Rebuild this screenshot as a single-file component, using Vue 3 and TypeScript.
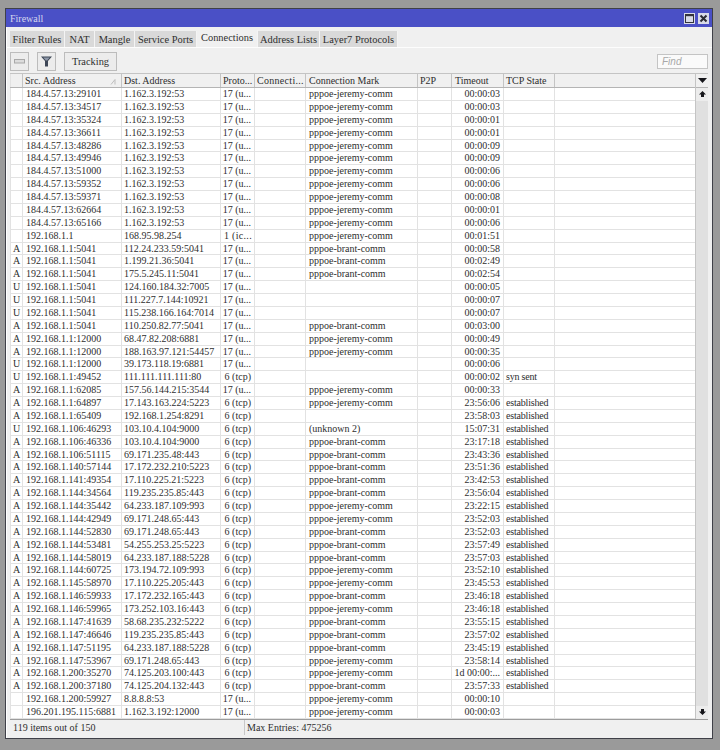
<script setup lang="ts">
type Row = [string, string, string, string, string, string, string]

const tabs = [
  { label: 'Filter Rules', width: 55 },
  { label: 'NAT', width: 30 },
  { label: 'Mangle', width: 40 },
  { label: 'Service Ports', width: 62 },
  { label: 'Connections', width: 61, active: true },
  { label: 'Address Lists', width: 62 },
  { label: 'Layer7 Protocols', width: 78 }
]

const columns = ['', 'Src. Address', 'Dst. Address', 'Proto...', 'Connecti...', 'Connection Mark', 'P2P', 'Timeout', 'TCP State', '']

const J = 'pppoe-jeremy-comm'
const B = 'pppoe-brant-comm'
const UDP = '17 (u...'
const ICMP = '1 (ic...'
const TCP = '6 (tcp)'
const EST = 'established'
const DNS = '1.162.3.192:53'

const rows: Row[] = [
  ['', '184.4.57.13:29101', DNS, UDP, J, '00:00:03', ''],
  ['', '184.4.57.13:34517', DNS, UDP, J, '00:00:03', ''],
  ['', '184.4.57.13:35324', DNS, UDP, J, '00:00:01', ''],
  ['', '184.4.57.13:36611', DNS, UDP, J, '00:00:01', ''],
  ['', '184.4.57.13:48286', DNS, UDP, J, '00:00:09', ''],
  ['', '184.4.57.13:49946', DNS, UDP, J, '00:00:09', ''],
  ['', '184.4.57.13:51000', DNS, UDP, J, '00:00:06', ''],
  ['', '184.4.57.13:59352', DNS, UDP, J, '00:00:06', ''],
  ['', '184.4.57.13:59371', DNS, UDP, J, '00:00:08', ''],
  ['', '184.4.57.13:62664', DNS, UDP, J, '00:00:01', ''],
  ['', '184.4.57.13:65166', DNS, UDP, J, '00:00:06', ''],
  ['', '192.168.1.1', '168.95.98.254', ICMP, J, '00:01:51', ''],
  ['A', '192.168.1.1:5041', '112.24.233.59:5041', UDP, B, '00:00:58', ''],
  ['A', '192.168.1.1:5041', '1.199.21.36:5041', UDP, B, '00:02:49', ''],
  ['A', '192.168.1.1:5041', '175.5.245.11:5041', UDP, B, '00:02:54', ''],
  ['U', '192.168.1.1:5041', '124.160.184.32:7005', UDP, '', '00:00:05', ''],
  ['U', '192.168.1.1:5041', '111.227.7.144:10921', UDP, '', '00:00:07', ''],
  ['U', '192.168.1.1:5041', '115.238.166.164:7014', UDP, '', '00:00:07', ''],
  ['A', '192.168.1.1:5041', '110.250.82.77:5041', UDP, B, '00:03:00', ''],
  ['A', '192.168.1.1:12000', '68.47.82.208:6881', UDP, J, '00:00:49', ''],
  ['A', '192.168.1.1:12000', '188.163.97.121:54457', UDP, J, '00:00:35', ''],
  ['U', '192.168.1.1:12000', '39.173.118.19:6881', UDP, '', '00:00:06', ''],
  ['U', '192.168.1.1:49452', '111.111.111.111:80', TCP, '', '00:00:02', 'syn sent'],
  ['A', '192.168.1.1:62085', '157.56.144.215:3544', UDP, J, '00:00:33', ''],
  ['A', '192.168.1.1:64897', '17.143.163.224:5223', TCP, J, '23:56:06', EST],
  ['A', '192.168.1.1:65409', '192.168.1.254:8291', TCP, '', '23:58:03', EST],
  ['U', '192.168.1.106:46293', '103.10.4.104:9000', TCP, '(unknown 2)', '15:07:31', EST],
  ['A', '192.168.1.106:46336', '103.10.4.104:9000', TCP, B, '23:17:18', EST],
  ['A', '192.168.1.106:51115', '69.171.235.48:443', TCP, B, '23:43:36', EST],
  ['A', '192.168.1.140:57144', '17.172.232.210:5223', TCP, B, '23:51:36', EST],
  ['A', '192.168.1.141:49354', '17.110.225.21:5223', TCP, B, '23:42:53', EST],
  ['A', '192.168.1.144:34564', '119.235.235.85:443', TCP, B, '23:56:04', EST],
  ['A', '192.168.1.144:35442', '64.233.187.109:993', TCP, J, '23:22:15', EST],
  ['A', '192.168.1.144:42949', '69.171.248.65:443', TCP, J, '23:52:03', EST],
  ['A', '192.168.1.144:52830', '69.171.248.65:443', TCP, B, '23:52:03', EST],
  ['A', '192.168.1.144:53481', '54.255.253.25:5223', TCP, B, '23:57:49', EST],
  ['A', '192.168.1.144:58019', '64.233.187.188:5228', TCP, B, '23:57:03', EST],
  ['A', '192.168.1.144:60725', '173.194.72.109:993', TCP, J, '23:52:10', EST],
  ['A', '192.168.1.145:58970', '17.110.225.205:443', TCP, J, '23:45:53', EST],
  ['A', '192.168.1.146:59933', '17.172.232.165:443', TCP, B, '23:46:18', EST],
  ['A', '192.168.1.146:59965', '173.252.103.16:443', TCP, J, '23:46:18', EST],
  ['A', '192.168.1.147:41639', '58.68.235.232:5222', TCP, B, '23:55:15', EST],
  ['A', '192.168.1.147:46646', '119.235.235.85:443', TCP, B, '23:57:02', EST],
  ['A', '192.168.1.147:51195', '64.233.187.188:5228', TCP, B, '23:45:19', EST],
  ['A', '192.168.1.147:53967', '69.171.248.65:443', TCP, J, '23:58:14', EST],
  ['A', '192.168.1.200:35270', '74.125.203.100:443', TCP, J, '1d 00:00:...', EST],
  ['A', '192.168.1.200:37180', '74.125.204.132:443', TCP, B, '23:57:33', EST],
  ['', '192.168.1.200:59927', '8.8.8.8:53', UDP, J, '00:00:10', ''],
  ['', '196.201.195.115:6881', '1.162.3.192:12000', UDP, J, '00:00:03', '']
]
</script>

<template>
  <div class="page">
    <div class="window">
      <div class="titlebar">
        <span class="title">Firewall</span>
        <span class="win-btn">
          <svg width="9" height="9" viewBox="0 0 9 9"><rect x="0.5" y="0.5" width="8" height="8" fill="none" stroke="#33343c" /><path d="M0.5 1.5h8" stroke="#33343c" stroke-width="1.4" /></svg>
        </span>
        <span class="win-btn">
          <svg width="9" height="9" viewBox="0 0 9 9"><path d="M1.5 1.5l6 6M7.5 1.5l-6 6" stroke="#2b2c34" stroke-width="2" /></svg>
        </span>
      </div>

      <div class="tabs">
        <div
          v-for="tab in tabs"
          :key="tab.label"
          class="tab"
          :class="{ active: tab.active }"
          :style="{ width: tab.width + 'px' }"
        >{{ tab.label }}</div>
      </div>

      <div class="toolbar">
        <button class="tool minus">
          <svg width="11" height="5" viewBox="0 0 11 5"><rect x="0.5" y="0.5" width="10" height="3.5" fill="#dcdcdc" stroke="#a8a8a8" /></svg>
        </button>
        <button class="tool funnel">
          <svg width="11" height="11" viewBox="0 0 11 11"><path d="M0 0.5h11L7 5V10.5H4V5z" fill="#3d4656" /><path d="M2.2 1.5h6.6L6.2 4.4H4.8z" fill="#8d97a8" /></svg>
        </button>
        <button class="tool tracking">Tracking</button>
        <div class="find">Find</div>
      </div>

      <div class="table">
        <div class="grid-wrap">
          <div class="row head">
            <div v-for="(col, i) in columns" :key="i" class="cell" :class="'c' + i">
              {{ col }}
              <svg v-if="i === 1" class="sort" width="6" height="6" viewBox="0 0 6 6"><path d="M1 5.5L5 0.5V5.5" fill="none" stroke="#bdbdbd" /></svg>
            </div>
          </div>
          <div v-for="(r, n) in rows" :key="n" class="row">
            <div class="cell c0">{{ r[0] }}</div>
            <div class="cell c1">{{ r[1] }}</div>
            <div class="cell c2">{{ r[2] }}</div>
            <div class="cell c3" :class="{ wide: r[3] === ICMP }">{{ r[3] }}</div>
            <div class="cell c4"></div>
            <div class="cell c5">{{ r[4] }}</div>
            <div class="cell c6"></div>
            <div class="cell c7">{{ r[5] }}</div>
            <div class="cell c8">{{ r[6] }}</div>
            <div class="cell c9"></div>
          </div>
        </div>
        <div class="scroll">
          <div class="scroll-menu">
            <svg width="9" height="5" viewBox="0 0 9 5"><path d="M0 0h9L4.5 5z" fill="#15151a" /></svg>
          </div>
          <div class="scroll-btn">
            <svg width="7" height="7" viewBox="0 0 7 7"><path d="M3.5 0L7 3.5 5 3.5V6H2V3.5H0z" fill="#15151a" /></svg>
          </div>
          <div class="scroll-track"></div>
          <div class="scroll-btn">
            <svg width="7" height="7" viewBox="0 0 7 7"><path d="M3.5 6L7 2.5 5 2.5V0H2V2.5H0z" fill="#15151a" /></svg>
          </div>
        </div>
      </div>

      <div class="status">
        <div class="status-left">119 items out of 150</div>
        <div class="status-right">Max Entries: 475256</div>
      </div>
    </div>
  </div>
</template>

<style>
html, body {
  margin: 0;
  background: #9a9a9a;
}
</style>

<style scoped>
.page {
  width: 720px;
  height: 750px;
  box-sizing: border-box;
  padding: 8px 7px 11px 5px;
  background: #9a9a9a;
  font-family: "Liberation Serif", serif;
  font-size: 10px;
  color: #2e2e2e;
  overflow: hidden;
}

.window {
  height: 100%;
  box-sizing: border-box;
  display: flex;
  flex-direction: column;
  background: #f0f0f0;
  border: 1px solid #3f4048;
  box-shadow: inset 1px 0 0 #fff;
}

.titlebar {
  flex: none;
  height: 18px;
  display: flex;
  align-items: center;
  gap: 3px;
  padding: 0 3px 0 4px;
  background: #4a50c6;
}

.title {
  flex: 1;
  color: #d5d7ee;
  font-size: 10px;
}

.win-btn {
  width: 11px;
  height: 11px;
  display: flex;
  align-items: center;
  justify-content: center;
  background: #d9dbe8;
}

.tabs {
  flex: none;
  display: flex;
  height: 16px;
  margin-top: 4px;
  padding-left: 4px;
  border-bottom: 1px solid #fdfdfd;
}

.tab {
  box-sizing: border-box;
  display: flex;
  align-items: center;
  justify-content: center;
  background: #d9d9d9;
  border-right: 1px solid #f4f4f4;
  font-size: 10.4px;
  white-space: nowrap;
}

.tab.active {
  background: #f0f0f0;
  margin-top: -1px;
  height: 17px;
  padding-bottom: 2px;
}

.toolbar {
  flex: none;
  display: flex;
  align-items: center;
  height: 20px;
  margin-top: 3px;
  padding: 0 4px 0 4px;
}

.tool {
  box-sizing: border-box;
  height: 19px;
  padding: 0;
  display: flex;
  align-items: center;
  justify-content: center;
  background: #ececec;
  border: 1px solid #bcbcbc;
  font-family: inherit;
  font-size: 10.4px;
  color: #2e2e2e;
}

.minus {
  width: 19px;
  margin-right: 8px;
}

.funnel {
  width: 19px;
  margin-right: 8px;
}

.tracking {
  width: 53px;
}

.find {
  box-sizing: border-box;
  margin-left: auto;
  width: 51px;
  height: 15px;
  padding-left: 4px;
  background: #fafafa;
  border: 1px solid #c4c4c4;
  font-family: "Liberation Sans", sans-serif;
  font-style: italic;
  font-size: 10px;
  line-height: 13px;
  color: #a8a8a8;
}

.table {
  flex: none;
  display: flex;
  height: 646px;
  margin: 2px 4px 0 4px;
  border-bottom: 1px solid #9c9c9c;
  background: #fff;
}

.grid-wrap {
  flex: 1;
  min-width: 0;
}

.row {
  display: grid;
  grid-template-columns: 13px 99px 99px 34px 51px 112px 34px 52px 51px 1fr;
  height: 12.88px;
  box-sizing: border-box;
  border-bottom: 1px solid #e2e2e2;
  line-height: 12px;
  white-space: nowrap;
}

.row.head {
  height: 15px;
  line-height: 14px;
  background: #f0f0f0;
  border-top: 1px solid #c4c4c4;
  border-bottom: 1px solid #b4b4b4;
}

.cell {
  position: relative;
  min-width: 0;
  overflow: hidden;
  box-sizing: border-box;
  border-right: 1px solid #e2e2e2;
}

.head .cell {
  border-right-color: #c4c4c4;
}

.c0 {
  text-align: center;
  border-left: 1px solid #e2e2e2;
}

.c1 {
  padding-left: 3px;
}

.head .c1 {
  padding-left: 2px;
}

.c2 {
  padding-left: 2px;
}

.c3 {
  padding-right: 3px;
  text-align: right;
}

.c3.wide {
  padding: 0 0 0 3px;
  text-align: left;
  letter-spacing: 0.3px;
}

.head .c3,
.head .c4,
.head .c6,
.head .c8 {
  padding-left: 2px;
  text-align: left;
}

.head .c4 {
  letter-spacing: 0.3px;
}

.c5 {
  padding-left: 3px;
}

.c7 {
  padding-right: 3px;
  text-align: right;
}

.head .c7 {
  padding-left: 3px;
  text-align: left;
}

.c8 {
  padding-left: 2px;
  letter-spacing: -0.2px;
}

.head .c8 {
  letter-spacing: 0;
}

.c9 {
  border-right: 0;
}

.sort {
  position: absolute;
  right: 5px;
  top: 5px;
}

.scroll {
  flex: none;
  width: 13px;
  display: flex;
  flex-direction: column;
  background: #e4e4e4;
  border-left: 1px solid #c4c4c4;
  box-sizing: border-box;
}

.scroll-menu {
  flex: none;
  height: 15px;
  display: flex;
  align-items: center;
  justify-content: center;
  background: #f0f0f0;
  border-top: 1px solid #c4c4c4;
  border-bottom: 1px solid #b4b4b4;
  box-sizing: border-box;
}

.scroll-btn {
  flex: none;
  height: 13px;
  display: flex;
  align-items: center;
  justify-content: center;
  background: #ececec;
}

.scroll-track {
  flex: 1;
  background: #e0e0e0;
}

.status {
  flex: 1;
  display: flex;
  margin: 0 4px 3px 5px;
  line-height: 15px;
  font-size: 10px;
}

.status-left {
  width: 234px;
  padding-left: 2px;
  box-sizing: border-box;
  border-right: 1px solid #c8c8c8;
}

.status-right {
  padding-left: 2px;
}
</style>
